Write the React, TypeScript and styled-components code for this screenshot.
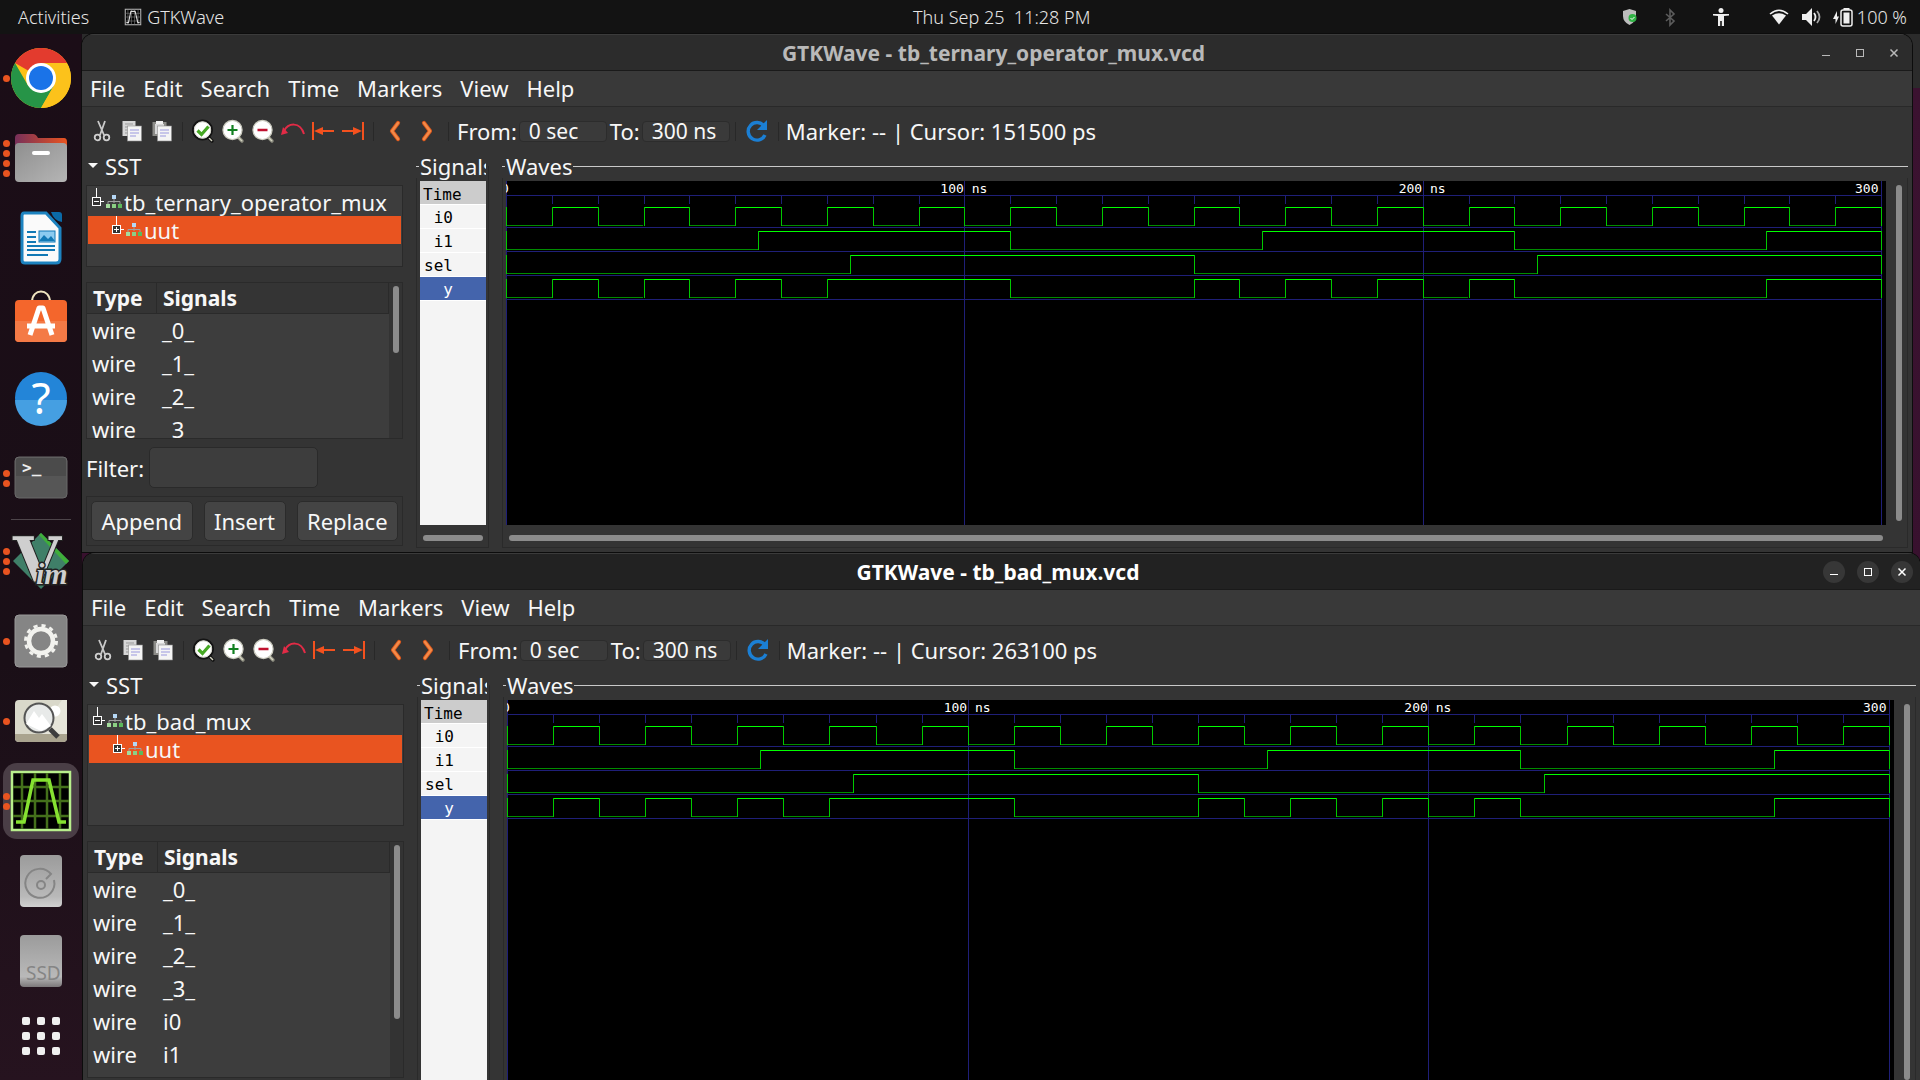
import React from 'react';
import styled, { createGlobalStyle, css } from 'styled-components';

const GlobalStyle = createGlobalStyle`
  *, *::before, *::after { box-sizing: border-box; }
  html, body { margin: 0; padding: 0; background: #131313; }
  body { font-family: "Noto Sans", "Open Sans", sans-serif; font-size: 22px; line-height: 28px; color: #f7f7f7; overflow: hidden; }
  button, input { font: inherit; color: inherit; }
  svg { display: block; flex: none; overflow: visible; }
`;

/* ---------- shell ---------- */

const Screen = styled.div`
  display: grid;
  grid-template-rows: 34px minmax(0, 1fr);
  height: 100vh;
`;

const TopBar = styled.header`
  display: grid;
  grid-template-columns: 1096fr auto 1000fr;
  align-items: center;
  padding: 0 13px 0 18px;
  background: #131313;
  color: #e6e6e6;
  font-size: 18px;
  font-weight: 300;
  line-height: 34px;
  white-space: pre;
`;

const BarButton = styled.button`
  display: flex;
  align-items: center;
  gap: 6px;
  height: 34px;
  padding: 0;
  border: 0;
  background: none;
  white-space: pre;
`;

const BarLeft = styled.div`
  display: flex;
  gap: 36px;
`;

const BarRight = styled.div`
  display: flex;
  align-items: center;
  justify-content: flex-end;
`;

const Tray = styled.span<{ $gap: number }>`
  margin-right: ${(p) => p.$gap}px;
`;

const Main = styled.div`
  display: grid;
  grid-template-columns: 82px minmax(0, 1fr);
  min-height: 0;
`;

/* ---------- dock ---------- */

const DockBar = styled.nav`
  display: flex;
  flex-direction: column;
  padding-top: 4px;
  overflow: hidden;
  background: linear-gradient(#1b0d17, #1a0f17 60%, #26131f);
`;

const DockItem = styled.button<{ $active?: boolean; $short?: boolean }>`
  position: relative;
  display: grid;
  place-items: center;
  flex: none;
  width: 76px;
  height: ${(p) => (p.$short ? 66 : 76)}px;
  margin: 2px 3px;
  padding: 0;
  border: 0;
  border-radius: 14px;
  background: ${(p) => (p.$active ? '#4a3e46' : 'none')};
`;

const DockRule = styled.div`
  flex: none;
  height: 1px;
  margin: 1px 11px;
  background: #4d454a;
`;

const Dots = styled.span`
  position: absolute;
  left: 0;
  top: 0;
  bottom: 0;
  display: flex;
  flex-direction: column;
  justify-content: center;
  gap: 3px;
`;

const Dot = styled.i`
  width: 7px;
  height: 7px;
  border-radius: 50%;
  background: #e95420;
`;

/* ---------- windows ---------- */

const Desktop = styled.main`
  display: grid;
  grid-template-rows: minmax(0, 518fr) minmax(0, 527fr);
  gap: 1px;
  min-width: 0;
  background: linear-gradient(#2b2b2b 54px, #3b1230 54px, #35102c);
`;

const WindowFrame = styled.section<{ $focused: boolean }>`
  display: flex;
  flex-direction: column;
  min-height: 0;
  margin: ${(p) => (p.$focused ? '0 0 0 1px' : '0 8px 0 0')};
  border-radius: 12px 12px 0 0;
  box-shadow: 0 0 0 1px #0c0c0c;
  background: #343434;
  overflow: hidden;
`;

const TitleBar = styled.div<{ $focused: boolean }>`
  display: grid;
  grid-template-columns: 1fr auto 1fr;
  align-items: center;
  flex: none;
  height: 37px;
  padding-right: 7px;
  border-top: 1px solid #3b3b3b;
  border-bottom: 1px solid #1a1a1a;
  background: ${(p) => (p.$focused ? '#222222' : '#2c2c2c')};
  color: ${(p) => (p.$focused ? '#ffffff' : '#b9b9b9')};
`;

const Title = styled.h1`
  grid-column: 2;
  margin: 0;
  font-size: 21px;
  line-height: 28px;
  font-weight: 700;
`;

const TitleButtons = styled.div`
  display: flex;
  justify-content: flex-end;
  gap: 12px;
`;

const TitleButton = styled.button<{ $focused: boolean }>`
  display: grid;
  place-items: center;
  width: 22px;
  height: 22px;
  padding: 0;
  border: 0;
  border-radius: 50%;
  background: ${(p) => (p.$focused ? '#373737' : 'none')};
`;

const MenuBar = styled.nav`
  display: flex;
  gap: 18px;
  flex: none;
  height: 36px;
  padding-left: 8px;
  border-bottom: 1px solid #292929;
  background: #393939;
`;

const MenuItem = styled.button`
  padding: 0;
  border: 0;
  background: none;
  line-height: 35px;
`;

const Toolbar = styled.div`
  display: flex;
  align-items: center;
  flex: none;
  height: 48px;
  padding-left: 5px;
  white-space: pre;
`;

const Tool = styled.button<{ $wide?: boolean }>`
  display: grid;
  place-items: center;
  flex: none;
  width: ${(p) => (p.$wide ? 32 : 30)}px;
  height: 30px;
  padding: 0;
  border: 0;
  background: none;
`;

const ToolRule = styled.i`
  width: 1px;
  height: 19px;
  margin: 0 5px;
  background: #282828;
`;

const TimeLabel = styled.label`
  display: flex;
  align-items: center;
  gap: 2px;
  padding-left: 3px;
`;

const TimeInput = styled.input`
  width: 88px;
  height: 21px;
  padding: 0 9px;
  border: 1px solid #2c2c2c;
  border-radius: 4px;
  background: #3a3a3a;
  font-size: 21px;
  line-height: 19px;
  outline: 0;
`;

const Readout = styled.output`
  padding-left: 2px;
`;

const Body = styled.div<{ $cut: boolean }>`
  display: grid;
  grid-template-columns: 317px 73px minmax(0, 1fr);
  gap: 13px;
  flex: 1;
  min-height: 0;
  padding: 0 4px ${(p) => (p.$cut ? 0 : 4)}px;
`;

/* ---------- left panel ---------- */

const Side = styled.div`
  display: flex;
  flex-direction: column;
  min-height: 0;
  padding-bottom: 2px;
`;

const SideHead = styled.button`
  display: flex;
  align-items: center;
  gap: 7px;
  flex: none;
  height: 22px;
  margin-bottom: 8px;
  padding: 0 2px;
  border: 0;
  background: none;
`;

const box = css`
  min-height: 0;
  border: 1px solid #2a2a2a;
  background: #3d3d3d;
  overflow: hidden;
`;

const Tree = styled.div`
  ${box}
  flex: 33 1 0;
  margin-bottom: 15px;
  padding: 2px 1px;
`;

const TreeRow = styled.div<{ $selected?: boolean }>`
  display: flex;
  align-items: center;
  gap: 2px;
  height: 28px;
  padding-left: ${(p) => (p.$selected ? 24 : 4)}px;
  background: ${(p) => (p.$selected ? '#e95420' : 'none')};
  line-height: 26px;
`;

const ListBox = styled.div`
  ${box}
  display: grid;
  grid-template-columns: minmax(0, 1fr) 13px;
  flex: 67 1 0;
`;

const ListClip = styled.div`
  overflow: hidden;
`;

const SignalTable = styled.table`
  width: 100%;
  border-collapse: separate;
  border-spacing: 0;
  table-layout: fixed;
  text-align: left;
`;

const Head = styled.th<{ $first?: boolean }>`
  width: ${(p) => (p.$first ? '70px' : 'auto')};
  height: 31px;
  padding: 0 6px;
  border-right: 1px solid #2a2a2a;
  border-bottom: 1px solid #2a2a2a;
  background: #343434;
  font-size: 21px;
  font-weight: 700;
  line-height: 30px;
`;

const Cell = styled.td`
  height: 33px;
  padding: 0 5px;
  line-height: 33px;
`;

const ListScroll = styled.div`
  display: flex;
  justify-content: center;
  padding: 3px 0;
  background: #333333;
`;

const Thumb = styled.i<{ $horizontal?: boolean }>`
  display: block;
  border-radius: 3px;
  background: #8b8b8b;
  ${(p) => (p.$horizontal ? 'height: 6px;' : 'width: 6px;')}
`;

const FilterRow = styled.label`
  display: flex;
  align-items: center;
  flex: none;
  gap: 5px;
  margin-top: 8px;
`;

const FilterInput = styled.input`
  width: 169px;
  height: 41px;
  padding: 0 10px;
  border: 1px solid #2a2a2a;
  border-radius: 5px;
  background: #3d3d3d;
  outline: 0;
`;

const Actions = styled.div`
  display: flex;
  gap: 11px;
  flex: none;
  margin-top: 8px;
  padding: 4px;
  border: 1px solid #2a2a2a;
`;

const ActionButton = styled.button`
  flex: 1 0 auto;
  height: 40px;
  padding: 0 6px;
  border: 1px solid #2b2b2b;
  border-radius: 5px;
  background: #444444;
`;

/* ---------- framed panes ---------- */

const Pane = styled.section<{ $cut: boolean }>`
  position: relative;
  display: flex;
  flex-direction: column;
  min-width: 0;
  min-height: 0;
  padding-left: 4px;
  &::before {
    content: '';
    position: absolute;
    inset: 11px 0 0 0;
    border: 1px solid #2a2a2a;
    border-width: 0 1px ${(p) => (p.$cut ? 0 : 1)}px;
    pointer-events: none;
  }
`;

const PaneHead = styled.h2<{ $clip?: boolean }>`
  position: relative;
  display: flex;
  align-items: center;
  flex: none;
  min-width: 0;
  margin: 0 ${(p) => (p.$clip ? 3 : 0)}px 3px -4px;
  font-size: 22px;
  font-weight: 400;
  line-height: 23px;
  white-space: nowrap;
  overflow-x: clip;
  background: #343434;
  &::before { content: ''; flex: none; width: 3px; height: 1px; margin-right: 1px; background: #c9c9c9; }
  &::after { content: ''; flex: 1; height: 1px; margin-left: 1px; background: #c9c9c9; }
`;

const SignalList = styled.ul`
  flex: 1;
  min-height: 0;
  margin: 0 3px 0 0;
  padding: 0;
  list-style: none;
  background: #f4f4f4;
  color: #000000;
  font-family: "DejaVu Sans Mono", monospace;
  font-size: 16px;
  line-height: 24px;
  overflow: hidden;
`;

const SignalName = styled.li<{ $kind?: 'time' | 'selected' }>`
  height: 24px;
  padding: 1px 33px 0 3px;
  border-bottom: 1px solid #ffffff;
  text-align: right;
  ${(p) => p.$kind === 'time' && 'background: #cccccc; text-align: left; padding: 2px 0 0 3px;'}
  ${(p) => p.$kind === 'selected' && 'background: #4464ac; color: #ffffff;'}
`;

const WaveRow = styled.div`
  display: grid;
  grid-template-columns: minmax(0, 1fr) 22px;
  flex: 1;
  min-height: 0;
`;

const Canvas = styled.div`
  padding-right: 5px;
  background: #000000;
  overflow: hidden;
  min-height: 0;
`;

const Plot = styled.svg`
  width: 100%;
  height: 100%;
  font-family: "DejaVu Sans Mono", monospace;
  font-size: 13px;
`;

const VScroll = styled.div<{ $cut: boolean }>`
  display: grid;
  padding: 4px 0 ${(p) => (p.$cut ? 0 : 4)}px 10px;
`;

const HScroll = styled.div<{ $right: number }>`
  flex: none;
  height: 23px;
  padding: 10px ${(p) => p.$right}px 0 3px;
`;

/* ---------- wave plot ---------- */

const SPAN = 300;
const pct = (t: number) => `${(t / SPAN) * 100}%`;

const clock = Array.from({ length: 29 }, (_, i) => (i + 1) * 10);
const TRACES: { name: string; edges: number[] }[] = [
  { name: 'i0', edges: clock },
  { name: 'i1', edges: [55, 110, 165, 220, 275] },
  { name: 'sel', edges: [75, 150, 225] },
  { name: 'y', edges: [10, 20, 30, 40, 50, 60, 70, 110, 150, 160, 170, 180, 190, 200, 210, 220, 275] },
];

function Waves() {
  return (
    <Plot shapeRendering="crispEdges" role="img" aria-label="Signal waveforms">
      <rect x="0" y="14" width="100%" height="1" fill="#1f1f78" />
      {clock.map((t) => (
        <rect key={t} x={pct(t)} y="15" width="1" height="8" fill="#1f1f78" />
      ))}
      {[0, 100, 200, 300].map((t) => (
        <rect key={t} x={pct(t)} y="0" width="1" height="100%" fill="#1f1f78" />
      ))}
      {TRACES.map((trace, row) => {
        const top = 26 + row * 24;
        const points = [0, ...trace.edges, SPAN];
        return (
          <g key={trace.name}>
            <rect x="0" y={top + 20} width="100%" height="1" fill="#1f1f78" />
            {points.slice(1).map((t, i) => (
              <rect
                key={t}
                x={pct(points[i])}
                width={pct(t - points[i])}
                y={i % 2 ? top : top + 18}
                height="1"
                fill={i % 2 ? '#00ff00' : '#008c00'}
              />
            ))}
            {points.map((t) => (
              <rect key={t} x={pct(t)} y={top} width="1" height="19" fill="#00c800" />
            ))}
          </g>
        );
      })}
      <g fill="#ffffff">
        <text x="-5" y="12">0</text>
        <text x={pct(100)} dx="-24" y="12">100 ns</text>
        <text x={pct(200)} dx="-24" y="12">200 ns</text>
        <text x={pct(300)} dx="-26" y="12">300</text>
      </g>
    </Plot>
  );
}

/* ---------- toolbar icons ---------- */

const Cut = () => (
  <svg width="20" height="22" viewBox="0 0 20 22" fill="none">
    <path d="M6 1l6 14M13 1L8 15" stroke="#c9c9c9" strokeWidth="1.8" />
    <circle cx="5.5" cy="17.5" r="2.8" stroke="#d0d0d0" strokeWidth="1.8" />
    <circle cx="14.5" cy="17.5" r="2.8" stroke="#d0d0d0" strokeWidth="1.8" />
  </svg>
);

const Copy = ({ paste }: { paste?: boolean }) => (
  <svg width="20" height="22" viewBox="0 0 20 22">
    {paste ? (
      <>
        <rect x="0.5" y="2" width="14" height="14" fill="#8c8c88" />
        <rect x="3" y="4" width="9" height="10" fill="#d8d8d8" />
        <rect x="4" y="1" width="7" height="3" fill="#f0f0f0" />
      </>
    ) : (
      <>
        <rect x="0.5" y="1" width="13" height="15" fill="#d6d6d6" />
        <path d="M3 4h8M3 7h8M3 10h3M3 13h3" stroke="#999" />
      </>
    )}
    <rect x="5.5" y="6" width="14" height="15" fill="#f4f4f4" stroke="#8d8d8d" strokeWidth="0.6" />
    <path d="M8 10h9M8 13h9M8 16h6" stroke="#9a97dd" strokeWidth="1.2" />
  </svg>
);

const Lens = ({ kind }: { kind: 'fit' | 'in' | 'out' }) => (
  <svg width="24" height="24" viewBox="0 0 24 24" fill="none">
    <path d="M16.5 17.5l4.5 4.5" stroke={kind === 'fit' ? '#111' : '#8d8d80'} strokeWidth="3.4" strokeLinecap="round" />
    <path d="M16.5 17.5l4.5 4.5" stroke="#d3d3c0" strokeWidth="1.4" />
    <circle cx="11.5" cy="11" r="9.6" fill="#fff" stroke={kind === 'fit' ? '#141414' : '#c9c9bd'} strokeWidth={kind === 'fit' ? 2 : 1.2} />
    {kind === 'fit' && <circle cx="11.5" cy="11" r="8.2" stroke="#d5d5cc" strokeWidth="1" />}
    {kind === 'fit' && <path d="M6.5 11.5l4 4 7-8" stroke="#46a824" strokeWidth="3.2" />}
    {kind === 'in' && <path d="M11.5 6v10M6.5 11h10" stroke="#128021" strokeWidth="2.2" />}
    {kind === 'out' && <path d="M6.5 11h10" stroke="#c0112f" strokeWidth="2.4" />}
  </svg>
);

const Undo = () => (
  <svg width="26" height="22" viewBox="0 0 26 22" fill="none">
    <path d="M4 11C8 3 20 1 24 14" stroke="#e22b46" strokeWidth="2" />
    <path d="M1 15l2-8 5 6z" fill="#e22b46" />
  </svg>
);

const Edge = ({ right }: { right?: boolean }) => (
  <svg width="24" height="20" viewBox="0 0 24 20" fill="none">
    <g transform={right ? 'translate(24 0) scale(-1 1)' : undefined}>
      <path d="M2 1v18M6 10h17" stroke="#f4511e" strokeWidth="2" />
      <path d="M3 10l9-4v8z" fill="#f4511e" />
    </g>
  </svg>
);

const Chevron = ({ right }: { right?: boolean }) => (
  <svg width="14" height="22" viewBox="0 0 14 22" fill="none">
    <g transform={right ? 'translate(14 0) scale(-1 1)' : undefined} strokeLinejoin="round" strokeLinecap="round">
      <path d="M10 3L4 11l6 8" stroke="#d8561c" strokeWidth="4.2" />
      <path d="M10 3L4 11l6 8" stroke="#f48a48" strokeWidth="2.4" />
    </g>
  </svg>
);

const Reload = () => (
  <svg width="26" height="24" viewBox="0 0 26 24" fill="none">
    <path d="M20 7A8.8 8.8 0 1 0 21 16" stroke="#1b7fd4" strokeWidth="3.4" />
    <path d="M23 1v10h-10z" fill="#1b7fd4" />
  </svg>
);

const Branch = ({ open }: { open?: boolean }) => (
  <svg width="12" height="28" viewBox="0 0 12 28" fill="none" shapeRendering="crispEdges">
    <path d="M4.500 0v9M9 13.500h3" stroke="#fff" />
    <rect x="0.500" y="9.500" width="8" height="8" fill="#333" stroke="#fff" />
    <path d={open ? 'M2 13.500h5' : 'M2 13.500h5M4.500 11v5'} stroke="#fff" />
  </svg>
);

const Module = () => (
  <svg width="16" height="16" viewBox="0 0 16 16">
    <path d="M8 4v5M2 11V7.500h12V11" stroke="#a0a0a0" fill="none" />
    <rect x="6" y="1" width="4" height="4" fill="#b5d7f5" />
    <rect x="0" y="10" width="4" height="4" fill="#a4dc9c" />
    <rect x="6" y="10" width="4" height="4" fill="#8ccf84" />
    <rect x="12" y="10" width="4" height="4" fill="#5cb85c" />
  </svg>
);

const Arrow = () => (
  <svg width="10" height="6" viewBox="0 0 10 6">
    <path d="M0 0h10L5 5z" fill="#f7f7f7" />
  </svg>
);

/* ---------- dock icons ---------- */

const Chrome = () => (
  <svg width="60" height="60" viewBox="0 0 60 60">
    <circle cx="30" cy="30" r="30" fill="#fbc116" />
    <path d="M30 30L4 15A30 30 0 0 1 56 15z" fill="#e33b2e" />
    <path d="M4 15A30 30 0 0 0 30 60L43 37.500 17 37.500z" fill="#269447" />
    <path d="M30 15h26a30 30 0 0 1-26 45l13-22.500z" fill="#fcc21b" />
    <circle cx="30" cy="30" r="15" fill="#fff" />
    <circle cx="30" cy="30" r="12" fill="#1a73e8" />
  </svg>
);

const Files = () => (
  <svg width="54" height="50" viewBox="0 0 54 50">
    <defs>
      <linearGradient id="folder" x2="1">
        <stop stopColor="#77305a" />
        <stop offset="1" stopColor="#e95420" />
      </linearGradient>
      <linearGradient id="steel" x2="1" y2="1">
        <stop stopColor="#8f8f8f" />
        <stop offset="1" stopColor="#b5b5b5" />
      </linearGradient>
    </defs>
    <path d="M1 5q0-4 4-4h14q3 0 5 4h26q3 0 3 4v14H1z" fill="url(#folder)" />
    <rect x="1" y="10" width="52" height="39" rx="4" fill="url(#steel)" />
    <rect x="18" y="18" width="18" height="4" rx="2" fill="#fff" />
  </svg>
);

const Writer = () => (
  <svg width="42" height="54" viewBox="0 0 42 54">
    <path d="M4 2h22l14 15v31q0 4-4 4H5q-3 0-3-3V5q0-3 2-3z" fill="#fafafa" stroke="#1d83c0" strokeWidth="3" />
    <path d="M31 1h8q3 0 3 3v7q-8-1-11-10z" fill="#0b6aa8" />
    <g stroke="#1279b5" strokeWidth="2">
      <path d="M7 21h9M7 26h9M7 31h9M7 35h28M7 39h28M7 44h21" />
    </g>
    <rect x="19" y="20" width="16" height="11" fill="#8ccbf0" stroke="#1279b5" />
    <path d="M19 30l5-6 4 4 3-3 4 5z" fill="#1279b5" />
  </svg>
);

const Software = () => (
  <svg width="54" height="52" viewBox="0 0 54 52" fill="none">
    <path d="M18 10C18-4 36-4 36 10" stroke="#f0e4c0" strokeWidth="2" />
    <rect x="1" y="8" width="52" height="42" rx="4" fill="#f4662c" />
    <path d="M1 29h52v17q0 4-4 4H5q-4 0-4-4z" fill="#f47a46" />
    <path d="M16 43L25 16h4l9 27M13 34h28" stroke="#fff" strokeWidth="5" strokeLinejoin="round" />
  </svg>
);

const Help = () => (
  <svg width="54" height="54" viewBox="0 0 54 54">
    <circle cx="27" cy="27" r="26" fill="#2385d8" />
    <path d="M1 29h52a26 26 0 0 1-52 0z" fill="#459fe2" />
    <text x="27" y="43" textAnchor="middle" fontSize="44" fill="#fff">?</text>
  </svg>
);

const Terminal = () => (
  <svg width="54" height="44" viewBox="0 0 54 44">
    <rect x="1" y="1" width="52" height="41" rx="4" fill="#565656" stroke="#696969" />
    <path d="M2 20V5q0-3 3-3h44q3 0 3 3v15z" fill="#4b4b4b" />
    <text x="8" y="17" fontFamily="DejaVu Sans Mono, monospace" fontWeight="700" fontSize="16" fill="#eee">&gt;_</text>
  </svg>
);

const Vim = () => (
  <svg width="60" height="58" viewBox="0 0 60 58">
    <path d="M30 1l28 28-28 28L2 29z" fill="#3f7f68" />
    <path d="M30 1l28 28-3 3L28 3z" fill="#3fae3a" />
    <g fontFamily="DejaVu Serif, serif" fontWeight="700" stroke="#222" fill="#cfcfcf">
      <text x="2" y="49" fontSize="62" strokeWidth="2" paintOrder="stroke">V</text>
      <text x="25" y="52" fontFamily="Liberation Serif, serif" fontSize="30" fontStyle="italic" strokeWidth="3" paintOrder="stroke">im</text>
    </g>
  </svg>
);

const Settings = () => (
  <svg width="54" height="54" viewBox="0 0 54 54" fill="none">
    <rect x="1" y="1" width="52" height="52" rx="4" fill="#858585" stroke="#999" />
    <circle cx="27" cy="27" r="15.500" stroke="#f2f2ee" strokeWidth="3" strokeDasharray="4.100 4.020" />
    <circle cx="27" cy="27" r="12" stroke="#f2f2ee" strokeWidth="4.500" />
  </svg>
);

const Viewer = () => (
  <svg width="54" height="44" viewBox="0 0 54 44" fill="none">
    <rect x="1" y="1" width="52" height="42" rx="4" fill="#d9d8ca" />
    <path d="M1 35h52v4q0 4-4 4H5q-4 0-4-4z" fill="#aaa48f" />
    <path d="M24 35L48 1h5v34z" fill="#e6e5da" />
    <circle cx="41" cy="12" r="5.500" fill="#fff" />
    <circle cx="25" cy="19" r="14.500" fill="#e8eae9" stroke="#555" strokeWidth="2" />
    <path d="M12 25l8-13 5 7 3-4 9 12-10 5z" fill="#fff" />
    <path d="M36 30l8 8" stroke="#3d3d3d" strokeWidth="5" />
  </svg>
);

const GtkWave = ({ small }: { small?: boolean }) => (
  <svg width={small ? 16 : 60} height={small ? 16 : 60} viewBox="0 0 60 60" fill="none">
    <rect x="1" y="1" width="58" height="58" fill="#000" stroke={small ? '#b5b5b5' : '#b8ee8c'} strokeWidth={small ? 4 : 2.500} />
    <path d="M11 2v56M24 2v56M36 2v56M49 2v56M2 16h56M2 30h56M2 45h56" stroke={small ? '#777' : '#44701b'} strokeWidth="2.500" />
    <path d="M5 51h8L22 9h16l10 42h7" stroke={small ? '#ddd' : '#86e231'} strokeWidth={small ? 4 : 3.500} />
  </svg>
);

const Disk = ({ ssd }: { ssd?: boolean }) => (
  <svg width="42" height="54" viewBox="0 0 42 54" fill="none">
    <defs>
      <linearGradient id={ssd ? 'ssd' : 'disk'} x2="0" y2="1">
        <stop stopColor="#9b9b9b" />
        <stop offset="0.800" stopColor="#b9b9b9" />
        <stop offset="1" stopColor={ssd ? '#7c787a' : '#d0d0d0'} />
      </linearGradient>
    </defs>
    <rect x="0" y="1" width="42" height="52" rx="4" fill={ssd ? 'url(#ssd)' : 'url(#disk)'} />
    {ssd ? (
      <text x="6" y="46" fontSize="19" fill="#858585">SSD</text>
    ) : (
      <g stroke="#858585" strokeWidth="2">
        <circle cx="21" cy="31" r="4" />
        <path d="M26 25l5-5A14.500 14.500 0 1 0 34 26" />
      </g>
    )}
  </svg>
);

const Apps = () => (
  <svg width="38" height="38" viewBox="0 0 38 38" fill="#f0f0f0">
    {[0, 15, 30].map((y) => [0, 15, 30].map((x) => <rect key={`${x}-${y}`} x={x} y={y} width="8" height="8" rx="2" />))}
  </svg>
);

/* ---------- tray icons ---------- */

const Shield = () => (
  <svg width="14" height="16" viewBox="0 0 14 16">
    <path d="M6.500 0l6.500 2v5q0 6-6.500 9Q0 13 0 7V2z" fill="#bdbdbd" />
    <circle cx="9.500" cy="9" r="4" fill="#2fb344" />
    <path d="M7.500 9l1.500 1.500 2.500-2.500" stroke="#fff" fill="none" />
  </svg>
);

const Bluetooth = () => (
  <svg width="10" height="17" viewBox="0 0 10 17" fill="none">
    <path d="M1 5l8 7-4 4V1l4 4-8 7" stroke="#5c5c5c" strokeWidth="1.600" />
  </svg>
);

const Access = () => (
  <svg width="16" height="18" viewBox="0 0 16 18" fill="#efefef">
    <circle cx="8" cy="2.500" r="2.500" />
    <path d="M0 6h16v1.500l-5 .5v10H8.800v-5H7.200v5H5V8l-5-.5z" />
  </svg>
);

const Wifi = () => (
  <svg width="20" height="16" viewBox="0 0 20 16">
    <path d="M1 5Q10-2.500 19 5" stroke="#efefef" strokeWidth="1.600" fill="none" />
    <path d="M3 6.500q7-4.500 14 0L10 15.500z" fill="#efefef" />
  </svg>
);

const Volume = () => (
  <svg width="19" height="18" viewBox="0 0 19 18" fill="none">
    <path d="M0 6h4l6-6v18l-6-6H0z" fill="#efefef" />
    <path d="M12 5q3 4 0 8" stroke="#efefef" strokeWidth="1.800" />
    <path d="M15 3q5 6 0 12" stroke="#a8a8a8" strokeWidth="1.800" />
  </svg>
);

const Battery = () => (
  <svg width="20" height="19" viewBox="0 0 20 19" fill="none">
    <path d="M4 3L0 11h2.500v5L6 8.500H4z" fill="#efefef" />
    <rect x="8" y="2" width="11" height="16" rx="2" stroke="#efefef" strokeWidth="1.500" />
    <rect x="10.500" y="4.500" width="6" height="11" fill="#efefef" />
    <path d="M10.500 1h6" stroke="#efefef" strokeWidth="2" />
  </svg>
);

const DOCK: { label: string; dots: number; icon: React.ReactNode; active?: boolean; rule?: boolean }[] = [
  { label: 'Google Chrome', dots: 1, icon: <Chrome /> },
  { label: 'Files', dots: 4, icon: <Files /> },
  { label: 'LibreOffice Writer', dots: 0, icon: <Writer /> },
  { label: 'Ubuntu Software', dots: 0, icon: <Software /> },
  { label: 'Help', dots: 0, icon: <Help /> },
  { label: 'Terminal', dots: 2, icon: <Terminal />, rule: true },
  { label: 'Vim', dots: 3, icon: <Vim /> },
  { label: 'Settings', dots: 1, icon: <Settings /> },
  { label: 'Image Viewer', dots: 1, icon: <Viewer /> },
  { label: 'GTKWave', dots: 2, icon: <GtkWave />, active: true },
  { label: 'Disk', dots: 0, icon: <Disk /> },
  { label: 'SSD disk', dots: 0, icon: <Disk ssd /> },
];

function Dock() {
  return (
    <DockBar aria-label="Dock">
      {DOCK.map((item) => (
        <React.Fragment key={item.label}>
          <DockItem $active={item.active} aria-label={item.label}>
            {item.icon}
            <Dots>{Array.from({ length: item.dots }, (_, i) => <Dot key={i} />)}</Dots>
          </DockItem>
          {item.rule && <DockRule />}
        </React.Fragment>
      ))}
      <DockItem $short aria-label="Show applications">
        <Apps />
      </DockItem>
    </DockBar>
  );
}

/* ---------- GTKWave window ---------- */

type WaveWindowProps = {
  id: string;
  module: string;
  cursor: string;
  signals: string[];
  thumb: string;
  focused?: boolean;
  cut?: boolean;
};

function WaveWindow({ id, module, cursor, signals, thumb, focused = false, cut = false }: WaveWindowProps) {
  return (
    <WindowFrame $focused={focused}>
      <TitleBar $focused={focused}>
        <Title>GTKWave - {module}.vcd</Title>
        <TitleButtons>
          <TitleButton $focused={focused} aria-label="Minimize">
            <svg width="10" height="10"><path d="M1 7.500h8" stroke="currentColor" /></svg>
          </TitleButton>
          <TitleButton $focused={focused} aria-label="Maximize">
            <svg width="10" height="10"><rect x="1.500" y="1.500" width="7" height="7" fill="none" stroke="currentColor" /></svg>
          </TitleButton>
          <TitleButton $focused={focused} aria-label="Close">
            <svg width="10" height="10"><path d="M1.500 1.500l7 7M8.500 1.500l-7 7" stroke="currentColor" strokeWidth="1.500" /></svg>
          </TitleButton>
        </TitleButtons>
      </TitleBar>
      <MenuBar>
        {['File', 'Edit', 'Search', 'Time', 'Markers', 'View', 'Help'].map((m) => <MenuItem key={m}>{m}</MenuItem>)}
      </MenuBar>
      <Toolbar>
        <Tool aria-label="Cut"><Cut /></Tool>
        <Tool aria-label="Copy"><Copy /></Tool>
        <Tool aria-label="Paste"><Copy paste /></Tool>
        <ToolRule />
        <Tool aria-label="Zoom fit"><Lens kind="fit" /></Tool>
        <Tool aria-label="Zoom in"><Lens kind="in" /></Tool>
        <Tool aria-label="Zoom out"><Lens kind="out" /></Tool>
        <Tool aria-label="Zoom undo"><Undo /></Tool>
        <Tool aria-label="Zoom to start"><Edge /></Tool>
        <Tool aria-label="Zoom to end"><Edge right /></Tool>
        <ToolRule />
        <Tool $wide aria-label="Previous edge"><Chevron /></Tool>
        <Tool $wide aria-label="Next edge"><Chevron right /></Tool>
        <ToolRule />
        <TimeLabel htmlFor={`${id}-from`}>From:<TimeInput id={`${id}-from`} defaultValue="0 sec" /></TimeLabel>
        <TimeLabel htmlFor={`${id}-to`}>To:<TimeInput id={`${id}-to`} defaultValue="300 ns" /></TimeLabel>
        <ToolRule />
        <Tool $wide aria-label="Reload"><Reload /></Tool>
        <ToolRule />
        <Readout>Marker: -- | Cursor: {cursor}</Readout>
      </Toolbar>
      <Body $cut={cut}>
        <Side>
          <SideHead><Arrow />SST</SideHead>
          <Tree>
            <TreeRow><Branch open /><Module />{module}</TreeRow>
            <TreeRow $selected><Branch /><Module />uut</TreeRow>
          </Tree>
          <ListBox>
            <ListClip>
              <SignalTable>
                <thead>
                  <tr><Head $first>Type</Head><Head>Signals</Head></tr>
                </thead>
                <tbody>
                  {signals.map((s) => <tr key={s}><Cell>wire</Cell><Cell>{s}</Cell></tr>)}
                </tbody>
              </SignalTable>
            </ListClip>
            <ListScroll><Thumb style={{ height: thumb }} /></ListScroll>
          </ListBox>
          {!cut && (
            <>
              <FilterRow htmlFor={`${id}-filter`}>Filter:<FilterInput id={`${id}-filter`} /></FilterRow>
              <Actions>
                <ActionButton>Append</ActionButton>
                <ActionButton>Insert</ActionButton>
                <ActionButton>Replace</ActionButton>
              </Actions>
            </>
          )}
        </Side>
        <Pane $cut={cut}>
          <PaneHead $clip>Signals</PaneHead>
          <SignalList>
            <SignalName $kind="time">Time</SignalName>
            <SignalName>i0</SignalName>
            <SignalName>i1</SignalName>
            <SignalName>sel</SignalName>
            <SignalName $kind="selected">y</SignalName>
          </SignalList>
          {!cut && <HScroll $right={6}><Thumb $horizontal /></HScroll>}
        </Pane>
        <Pane $cut={cut}>
          <PaneHead>Waves</PaneHead>
          <WaveRow>
            <Canvas><Waves /></Canvas>
            <VScroll $cut={cut}><Thumb /></VScroll>
          </WaveRow>
          {!cut && <HScroll $right={25}><Thumb $horizontal /></HScroll>}
        </Pane>
      </Body>
    </WindowFrame>
  );
}

export default function App() {
  return (
    <Screen>
      <GlobalStyle />
      <TopBar>
        <BarLeft>
          <BarButton>Activities</BarButton>
          <BarButton><GtkWave small />GTKWave</BarButton>
        </BarLeft>
        <BarButton>Thu Sep 25  11:28 PM</BarButton>
        <BarRight>
          <Tray $gap={28}><Shield /></Tray>
          <Tray $gap={38}><Bluetooth /></Tray>
          <Tray $gap={40}><Access /></Tray>
          <Tray $gap={13}><Wifi /></Tray>
          <Tray $gap={12}><Volume /></Tray>
          <Tray $gap={4}><Battery /></Tray>
          100 %
        </BarRight>
      </TopBar>
      <Main>
        <Dock />
        <Desktop>
          <WaveWindow id="ternary" module="tb_ternary_operator_mux" cursor="151500 ps" signals={['_0_', '_1_', '_2_', '_3_']} thumb="45%" />
          <WaveWindow id="bad" module="tb_bad_mux" cursor="263100 ps" signals={['_0_', '_1_', '_2_', '_3_', 'i0', 'i1']} thumb="76%" focused cut />
        </Desktop>
      </Main>
    </Screen>
  );
}
